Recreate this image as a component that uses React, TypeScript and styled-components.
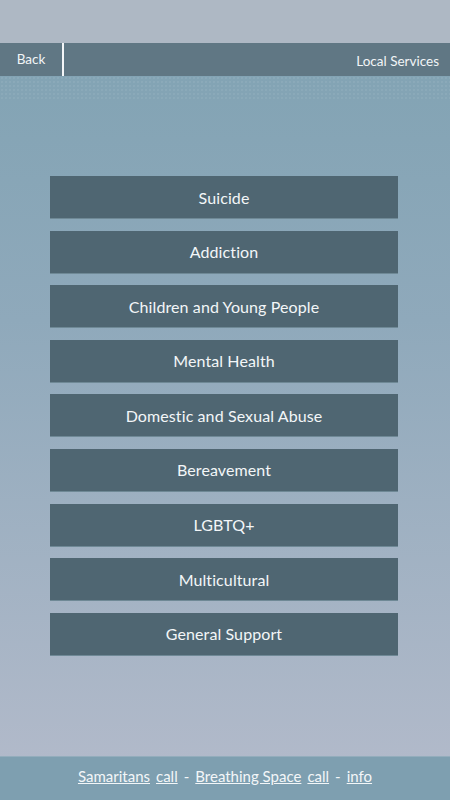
import React from 'react';
import styled, { createGlobalStyle } from 'styled-components';

const GlobalStyle = createGlobalStyle`
  html, body {
    margin: 0;
    padding: 0;
    font-family: Lato, "Open Sans", sans-serif;
    font-variant-ligatures: none;
  }
`;

const Page = styled.div`
  width: 450px;
  height: 800px;
  display: flex;
  flex-direction: column;
  background: linear-gradient(to bottom, #7fa2b2 0%, #8fa9bb 40%, #b4bbcb 100%);
  overflow: hidden;
`;

const TopBand = styled.div`
  height: 43px;
  background: #aeb8c4;
`;

const Header = styled.div`
  height: 33px;
  display: flex;
  align-items: stretch;
  background: #607784;
  color: #f2f5f7;
  font-size: 13.5px;
`;

const BackButton = styled.button`
  width: 64px;
  border: none;
  border-right: 2px solid #f4f6f8;
  background: transparent;
  color: inherit;
  font: inherit;
  padding: 0 0 2px;
  cursor: pointer;
`;

const Title = styled.div`
  flex: 1;
  display: flex;
  align-items: center;
  justify-content: flex-end;
  padding-right: 11px;
  padding-top: 2px;
`;

const Dots = styled.div`
  height: 24px;
  background-image: radial-gradient(circle, rgba(150, 178, 192, 0.6) 0.6px, transparent 0.9px);
  background-size: 4px 4px;
`;

const Menu = styled.nav`
  flex: 1;
  display: flex;
  flex-direction: column;
  gap: 11.6px;
  padding: 76px 52px 0 50px;
`;

const MenuButton = styled.button`
  height: 43px;
  width: 348px;
  border: none;
  border-bottom: 1px solid #6f8996;
  background: #4f6672;
  color: #f3f6f8;
  font-family: Lato, "Open Sans", sans-serif;
  font-variant-ligatures: none;
  font-size: 16px;
  letter-spacing: 0.1px;
  cursor: pointer;
`;

const Footer = styled.footer`
  height: 44px;
  background: #7e9fb0;
  border-top: 1px solid #93adbc;
  display: flex;
  align-items: center;
  justify-content: center;
  gap: 6px;
  color: #f3f6f8;
  font-size: 15px;
  padding-bottom: 6px;
  box-sizing: border-box;
`;

const Link = styled.a`
  color: #f3f6f8;
  text-decoration: underline;
`;

const items = [
  'Suicide',
  'Addiction',
  'Children and Young People',
  'Mental Health',
  'Domestic and Sexual Abuse',
  'Bereavement',
  'LGBTQ+',
  'Multicultural',
  'General Support',
];

export default function App() {
  return (
    <Page>
      <GlobalStyle />
      <TopBand />
      <Header>
        <BackButton>Back</BackButton>
        <Title>Local Services</Title>
      </Header>
      <Dots />
      <Menu>
        {items.map(item => (
          <MenuButton key={item}>{item}</MenuButton>
        ))}
      </Menu>
      <Footer>
        <Link href="#">Samaritans</Link>
        <Link href="#">call</Link>
        <span>-</span>
        <Link href="#">Breathing Space</Link>
        <Link href="#">call</Link>
        <span>-</span>
        <Link href="#">info</Link>
      </Footer>
    </Page>
  );
}
